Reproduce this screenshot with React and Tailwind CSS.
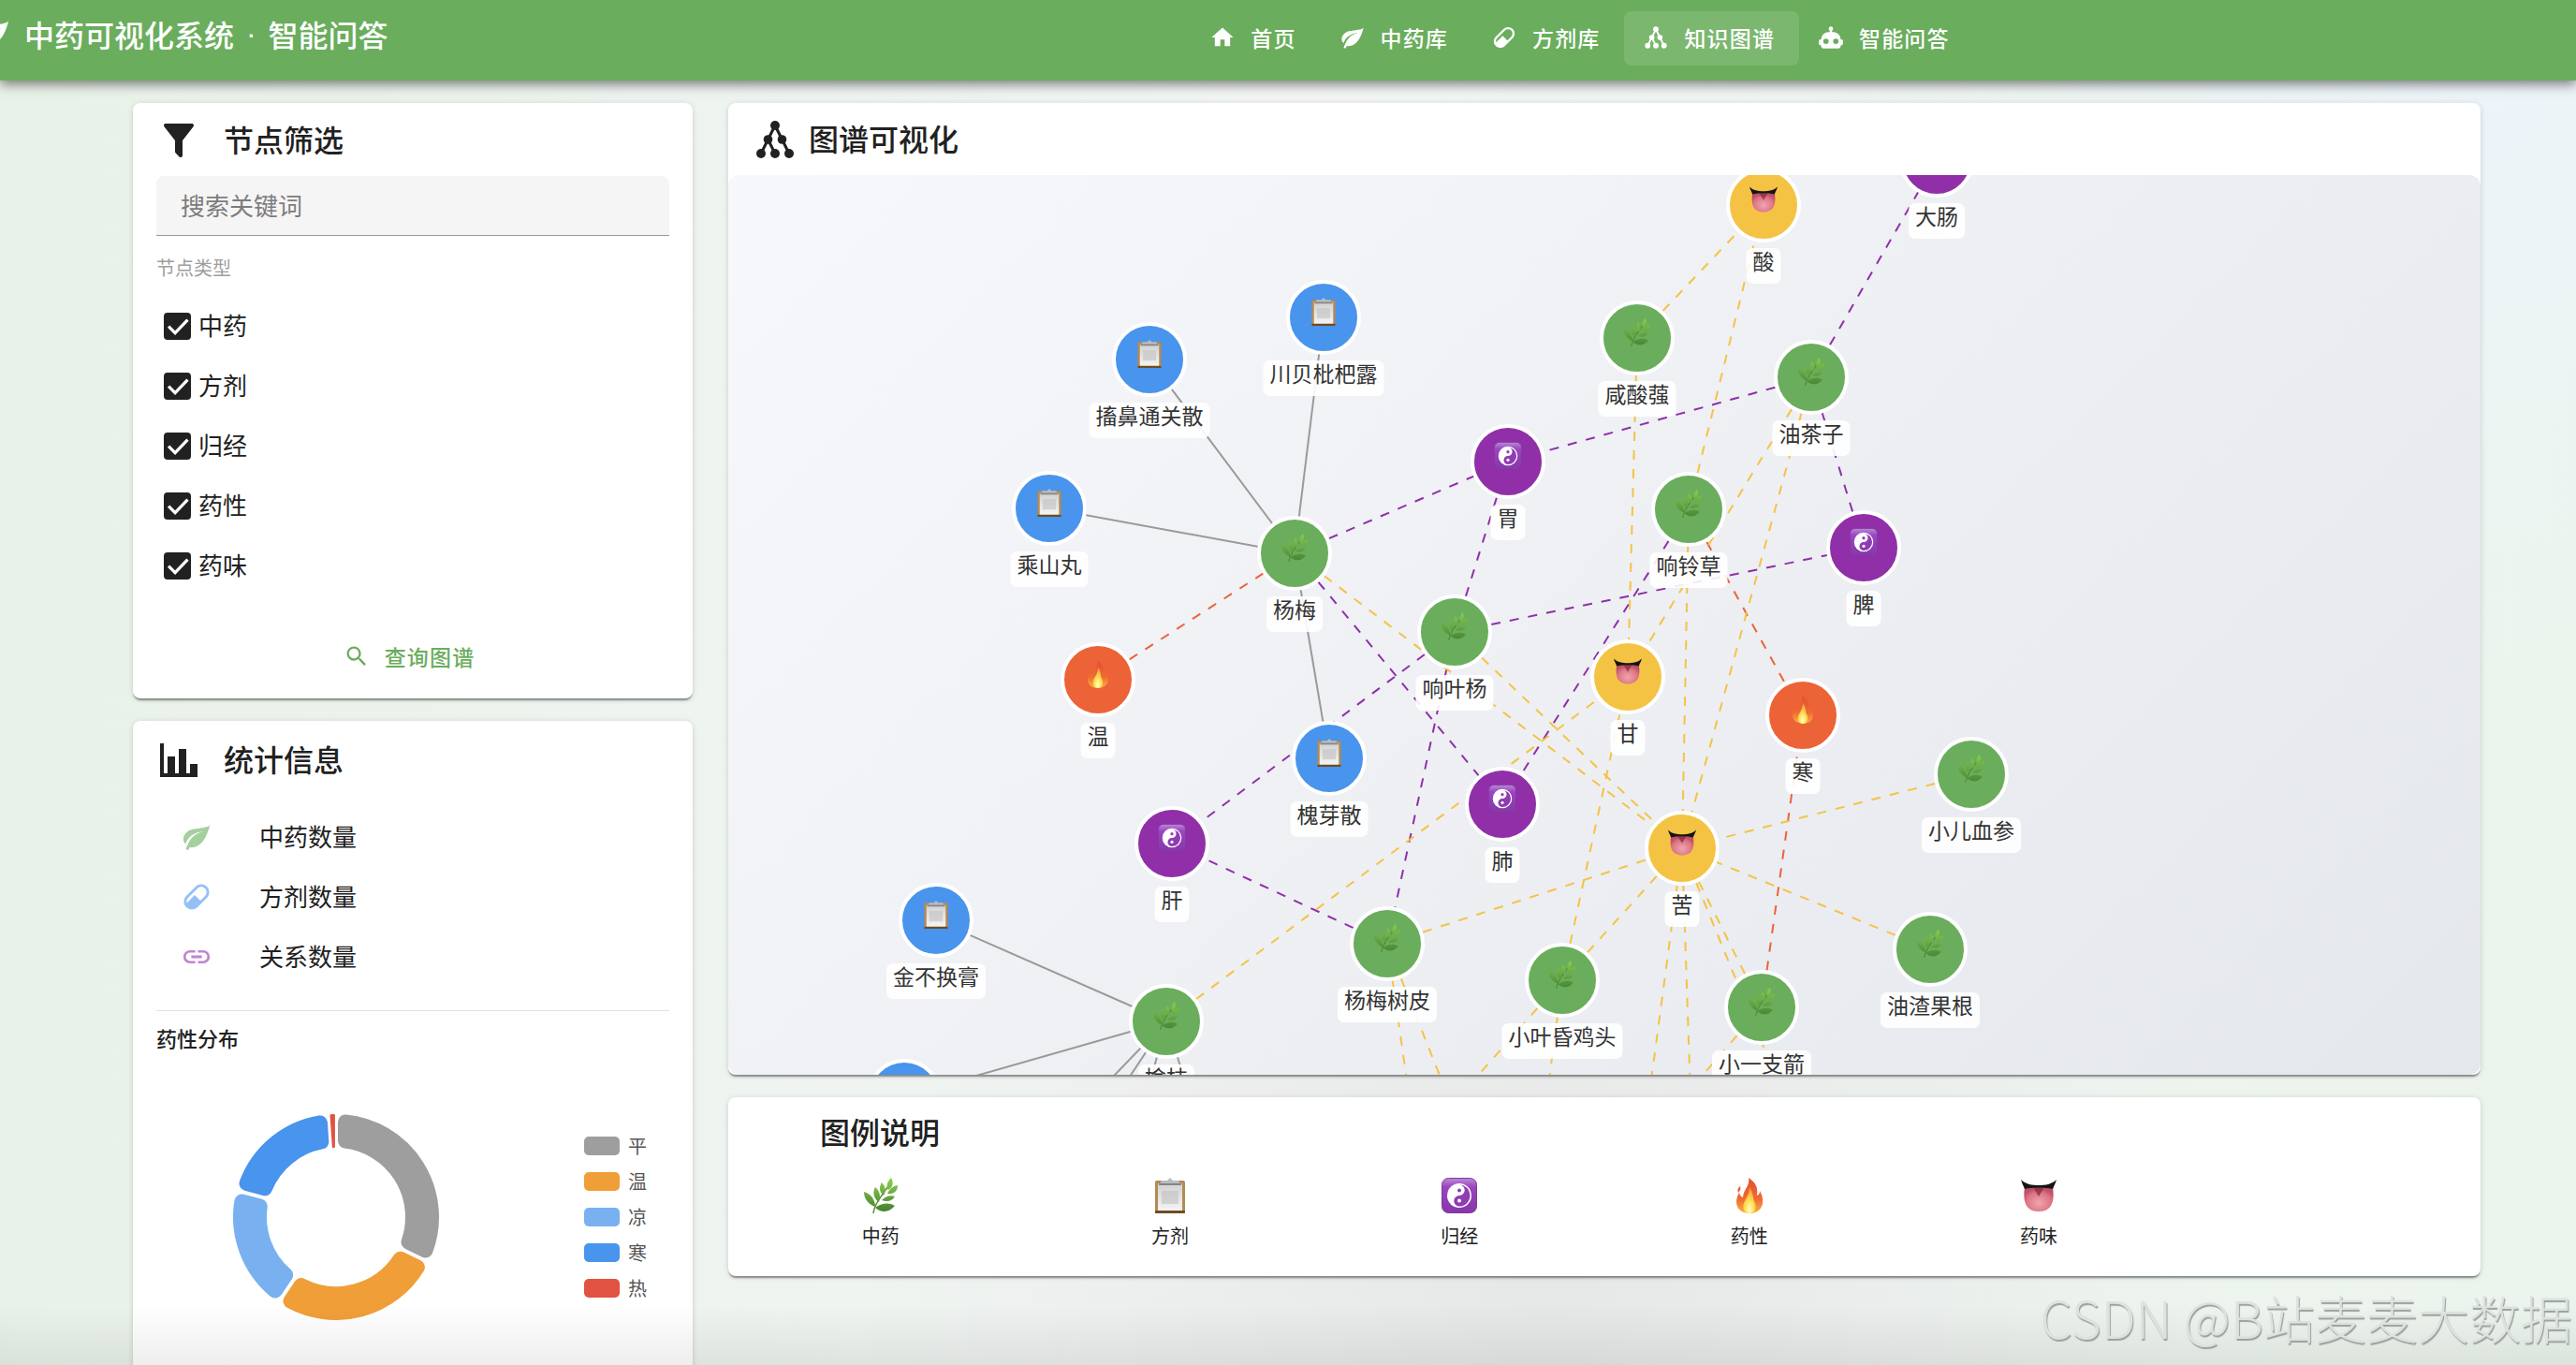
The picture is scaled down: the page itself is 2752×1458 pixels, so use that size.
import React, { useState } from "react";

const navItems = [
  { label: "首页", icon: "home" },
  { label: "中药库", icon: "leaf" },
  { label: "方剂库", icon: "pill" },
  { label: "知识图谱", icon: "graph" },
  { label: "智能问答", icon: "robot" },
];

const nodeTypes = ["中药", "方剂", "归经", "药性", "药味"];

const stats = [
  { label: "中药数量", icon: "leaf", color: "text-[#a5cf9f]" },
  { label: "方剂数量", icon: "pill", color: "text-[#93c1f6]" },
  { label: "关系数量", icon: "link", color: "text-[#bf85d0]" },
];

const natures = [
  { label: "平", fill: "#9e9e9e", swatch: "bg-[#9e9e9e]", from: 0, to: 116, corner: 8 },
  { label: "温", fill: "#f09e38", swatch: "bg-[#f09e38]", from: 116, to: 214, corner: 8 },
  { label: "凉", fill: "#79b1f0", swatch: "bg-[#79b1f0]", from: 214, to: 285, corner: 8 },
  { label: "寒", fill: "#4994ec", swatch: "bg-[#4994ec]", from: 285, to: 356, corner: 8 },
  { label: "热", fill: "#e25241", swatch: "bg-[#e25241]", from: 356, to: 360, corner: 1 },
];

const legendItems = [
  { label: "中药", kind: "herb" },
  { label: "方剂", kind: "formula" },
  { label: "归经", kind: "meridian" },
  { label: "药性", kind: "nature" },
  { label: "药味", kind: "taste" },
];

const nodeColors = {
  herb: "#6aad5d",
  formula: "#4994ec",
  meridian: "#902fa8",
  nature: "#ec6337",
  taste: "#f5c344",
};

// Coordinates are relative to the graph canvas
const nodes = {
  chuanbei: { x: 636, y: 152, kind: "formula", label: "川贝枇杷露" },
  chubi: { x: 450, y: 197, kind: "formula", label: "搐鼻通关散" },
  chengshan: { x: 343, y: 356, kind: "formula", label: "乘山丸" },
  yangmei: { x: 605, y: 404, kind: "herb", label: "杨梅" },
  suan: { x: 1106, y: 32, kind: "taste", label: "酸" },
  dachang: { x: 1291, y: -16, kind: "meridian", label: "大肠" },
  xiansuan: { x: 971, y: 174, kind: "herb", label: "咸酸蔃" },
  youcha: { x: 1157, y: 216, kind: "herb", label: "油茶子" },
  wei: { x: 833, y: 306, kind: "meridian", label: "胃" },
  xiangling: { x: 1026, y: 357, kind: "herb", label: "响铃草" },
  pi: { x: 1213, y: 398, kind: "meridian", label: "脾" },
  xiangye: { x: 776, y: 488, kind: "herb", label: "响叶杨" },
  gan: { x: 961, y: 536, kind: "taste", label: "甘" },
  wen: { x: 395, y: 539, kind: "nature", label: "温" },
  huaiya: { x: 642, y: 623, kind: "formula", label: "槐芽散" },
  ganzang: { x: 474, y: 714, kind: "meridian", label: "肝" },
  jinbuhuan: { x: 222, y: 796, kind: "formula", label: "金不换膏" },
  yuzhi: { x: 468, y: 904, kind: "herb", label: "榆枝" },
  hidden: { x: 188, y: 984, kind: "formula", label: "" },
  shupi: { x: 704, y: 821, kind: "herb", label: "杨梅树皮" },
  han: { x: 1148, y: 577, kind: "nature", label: "寒" },
  fei: { x: 827, y: 672, kind: "meridian", label: "肺" },
  ku: { x: 1019, y: 719, kind: "taste", label: "苦" },
  xiaoer: { x: 1328, y: 640, kind: "herb", label: "小儿血参" },
  youzha: { x: 1284, y: 827, kind: "herb", label: "油渣果根" },
  xiaoye: { x: 891, y: 860, kind: "herb", label: "小叶昏鸡头" },
  xiaoyi: { x: 1104, y: 889, kind: "herb", label: "小一支箭" },
};

// Second entry is a node key, or a point outside the visible canvas
const edges = [
  ["yangmei", "chubi", "plain"],
  ["yangmei", "chuanbei", "plain"],
  ["yangmei", "chengshan", "plain"],
  ["yangmei", "huaiya", "plain"],
  ["yuzhi", "jinbuhuan", "plain"],
  ["yuzhi", "hidden", "plain"],
  ["yuzhi", [388, 987], "plain"],
  ["yuzhi", [413, 987], "plain"],
  ["yuzhi", [446, 987], "plain"],
  ["yuzhi", [494, 987], "plain"],
  ["wen", "yangmei", "nature"],
  ["xiangling", "han", "nature"],
  ["xiaoyi", "han", "nature"],
  ["yangmei", "wei", "meridian"],
  ["youcha", "wei", "meridian"],
  ["youcha", "dachang", "meridian"],
  ["youcha", "pi", "meridian"],
  ["xiangye", "wei", "meridian"],
  ["xiangye", "pi", "meridian"],
  ["yangmei", "fei", "meridian"],
  ["xiangye", "ganzang", "meridian"],
  ["shupi", "ganzang", "meridian"],
  ["xiangye", "shupi", "meridian"],
  ["xiangling", "fei", "meridian"],
  ["xiansuan", "suan", "taste"],
  ["xiangling", "suan", "taste"],
  ["xiansuan", "gan", "taste"],
  ["youcha", "gan", "taste"],
  ["youcha", "ku", "taste"],
  ["xiangling", "ku", "taste"],
  ["yangmei", "ku", "taste"],
  ["xiangye", "ku", "taste"],
  ["yuzhi", "gan", "taste"],
  ["xiaoye", "gan", "taste"],
  ["shupi", "ku", "taste"],
  ["xiaoye", "ku", "taste"],
  ["xiaoyi", "ku", "taste"],
  ["xiaoer", "ku", "taste"],
  ["youzha", "ku", "taste"],
  ["ku", [1127, 982], "taste"],
  ["ku", [984, 982], "taste"],
  ["ku", [1028, 982], "taste"],
  ["xiaoyi", [1030, 974], "taste"],
  ["xiaoye", [876, 974], "taste"],
  ["xiaoye", [790, 974], "taste"],
  ["shupi", [726, 974], "taste"],
  ["shupi", [765, 974], "taste"],
];

const iconPaths = {
  home: "M10,20V14H14V20H19V12H22L12,3L2,12H5V20H10Z",
  leaf: "M17,8C8,10 5.9,16.17 3.82,21.34L5.71,22L6.66,19.7C7.14,19.87 7.64,20 8,20C19,20 22,3 22,3C21,5 14,5.25 9,6.25C4,7.25 2,11.5 2,13.5C2,15.5 3.75,17.25 3.75,17.25C7,8 17,8 17,8Z",
  pill: "M4.22,11.29L11.29,4.22C13.64,1.88 17.43,1.88 19.78,4.22C22.12,6.56 22.12,10.36 19.78,12.71L12.71,19.78C10.36,22.12 6.56,22.12 4.22,19.78C1.88,17.43 1.88,13.64 4.22,11.29M5.64,12.71C4.59,13.75 4.24,15.24 4.6,16.57L10.59,10.59L14.83,14.83L18.36,11.29C19.93,9.73 19.93,7.2 18.36,5.64C16.8,4.07 14.27,4.07 12.71,5.64L5.64,12.71Z",
  robot:
    "M12,2A2,2 0 0,1 14,4C14,4.74 13.6,5.39 13,5.73V7H14A7,7 0 0,1 21,14H22A1,1 0 0,1 23,15V18A1,1 0 0,1 22,19H21V20A2,2 0 0,1 19,22H5A2,2 0 0,1 3,20V19H2A1,1 0 0,1 1,18V15A1,1 0 0,1 2,14H3A7,7 0 0,1 10,7H11V5.73C10.4,5.39 10,4.74 10,4A2,2 0 0,1 12,2M7.5,13A2.5,2.5 0 0,0 5,15.5A2.5,2.5 0 0,0 7.5,18A2.5,2.5 0 0,0 10,15.5A2.5,2.5 0 0,0 7.5,13M16.5,13A2.5,2.5 0 0,0 14,15.5A2.5,2.5 0 0,0 16.5,18A2.5,2.5 0 0,0 19,15.5A2.5,2.5 0 0,0 16.5,13Z",
  filter:
    "M14,12V19.88C14.04,20.18 13.94,20.5 13.71,20.71C13.32,21.1 12.69,21.1 12.3,20.71L10.29,18.7C10.06,18.47 9.96,18.16 10,17.87V12H9.97L4.21,4.62C3.87,4.19 3.95,3.56 4.38,3.22C4.57,3.08 4.78,3 5,3H19C19.22,3 19.43,3.08 19.62,3.22C20.05,3.56 20.13,4.19 19.79,4.62L14.03,12H14Z",
  chart: "M22,21H2V3H4V19H6V10H10V19H12V6H16V19H18V14H22V21Z",
  link: "M3.9,12C3.9,10.29 5.29,8.9 7,8.9H11V7H7A5,5 0 0,0 2,12A5,5 0 0,0 7,17H11V15.1H7C5.29,15.1 3.9,13.71 3.9,12M8,13H16V11H8V13M17,7H13V8.9H17C18.71,8.9 20.1,10.29 20.1,12C20.1,13.71 18.71,15.1 17,15.1H13V17H17A5,5 0 0,0 22,12A5,5 0 0,0 17,7Z",
  search:
    "M9.5,3A6.5,6.5 0 0,1 16,9.5C16,11.11 15.41,12.59 14.44,13.73L14.71,14H15.5L20.5,19L19,20.5L14,15.5V14.71L13.73,14.44C12.59,15.41 11.11,16 9.5,16A6.5,6.5 0 0,1 3,9.5A6.5,6.5 0 0,1 9.5,3M9.5,5C7,5 5,7 5,9.5C5,12 7,14 9.5,14C12,14 14,12 14,9.5C14,7 12,5 9.5,5Z",
};

const Icon = ({ name, className }) => (
  <svg viewBox="0 0 24 24" className={className} fill="currentColor" aria-hidden="true">
    {name === "graph" ? (
      <>
        <path
          d="M12 4.5L8.25 12L4.5 19.5M8.25 12L12 19.5M12 4.5L15.75 12L19.5 19.5"
          fill="none"
          stroke="currentColor"
          strokeWidth="1.5"
        />
        <circle cx="12" cy="4.5" r="2.5" />
        <circle cx="8.25" cy="12" r="2.4" />
        <circle cx="15.75" cy="12" r="2.4" />
        <circle cx="4.5" cy="19.5" r="2.5" />
        <circle cx="12" cy="19.5" r="2.5" />
        <circle cx="19.5" cy="19.5" r="2.5" />
      </>
    ) : (
      <path d={iconPaths[name]} />
    )}
  </svg>
);

const Gradients = () => (
  <svg className="absolute size-0" aria-hidden="true">
    <defs>
      <linearGradient id="herbFill" x1="0" y1="0" x2="0" y2="38" gradientUnits="userSpaceOnUse">
        <stop offset="0" stopColor="#8fd14f" />
        <stop offset="1" stopColor="#3f7d2c" />
      </linearGradient>
      <linearGradient id="paperFill" x1="0" y1="0" x2="0" y2="1">
        <stop offset="0" stopColor="#d2d2d2" />
        <stop offset="1" stopColor="#f4f4f4" />
      </linearGradient>
      <linearGradient id="meridianFill" x1="0" y1="0" x2="0" y2="1">
        <stop offset="0" stopColor="#b98ad8" />
        <stop offset="0.25" stopColor="#9b45c0" />
        <stop offset="1" stopColor="#8637a8" />
      </linearGradient>
      <linearGradient id="flameOuter" x1="0" y1="0" x2="0" y2="1">
        <stop offset="0" stopColor="#e2502f" />
        <stop offset="0.6" stopColor="#f06a35" />
        <stop offset="1" stopColor="#f7b53c" />
      </linearGradient>
      <radialGradient id="flameInner" cx="0.5" cy="0.85" r="0.8">
        <stop offset="0" stopColor="#fffbd0" />
        <stop offset="0.4" stopColor="#ffe556" />
        <stop offset="1" stopColor="#f59a3a" />
      </radialGradient>
      <radialGradient id="tongueFill" cx="0.5" cy="0.65" r="0.6">
        <stop offset="0" stopColor="#f0a5ae" />
        <stop offset="0.7" stopColor="#dd7586" />
        <stop offset="1" stopColor="#bd4f66" />
      </radialGradient>
    </defs>
  </svg>
);

// Pictograms share a 38 unit box
const Pictogram = ({ kind }) => {
  if (kind === "herb") {
    return (
      <g fill="url(#herbFill)">
        <path d="M11 38C12 29 19 20 27 9" fill="none" stroke="#4d8530" strokeWidth="1.4" />
        <path d="M30 0C33 5 32 10 27 13C24 9 26 4 30 0Z" />
        <path d="M20 5C24 9 25 14 22 19C17 15 17 10 20 5Z" />
        <path d="M13 10C18 14 19 20 17 26C11 22 10 15 13 10Z" />
        <path d="M1 15C8 17 13 23 13 31C5 28 1 22 1 15Z" />
        <path d="M37 8C37 14 33 18 26 17C28 12 32 9 37 8Z" />
        <path d="M34 20C31 25 26 26 20 24C24 20 29 18 34 20Z" />
        <path d="M34 30C28 37 20 38 13 32C19 27 28 26 34 30Z" />
      </g>
    );
  }
  if (kind === "formula") {
    return (
      <g>
        <rect x="3" y="3" width="32" height="35" rx="2" fill="#b58a50" />
        <rect x="3" y="35" width="32" height="3" rx="1" fill="#6e4c22" />
        <rect x="6" y="6" width="26" height="29" fill="url(#paperFill)" />
        <path d="M10 14H28V28H10Z" fill="#c2c2c2" opacity="0.6" />
        <path d="M8 6L10 3H16L19 0L22 3H28L30 6Z" fill="#b7bcc4" />
        <path d="M7 6H31V8H7Z" fill="#858585" />
      </g>
    );
  }
  if (kind === "meridian") {
    return (
      <g>
        <rect x="0.5" y="0.5" width="37" height="37" rx="7" fill="url(#meridianFill)" stroke="#7d3a9c" />
        <circle cx="19" cy="19" r="13" fill="#fff" />
        <path d="M19 7.5A11.5 11.5 0 0 1 19 30.5A5.75 5.75 0 0 1 19 19A5.75 5.75 0 0 0 19 7.5Z" fill="#8f3cb2" />
        <circle cx="19" cy="13.5" r="2" fill="#8f3cb2" />
        <circle cx="19" cy="24.5" r="2" fill="#fff" />
      </g>
    );
  }
  if (kind === "nature") {
    return (
      <g>
        <path
          d="M18 0C27 6 28 12 27 19C29 18 30 17 30 14C35 22 36 37 19 38C3 37 3 24 8 16C9 19 10 20 12 21C12 13 20 9 18 0Z"
          fill="url(#flameOuter)"
        />
        <path d="M9 9C6 11 6 14 7 16C9 14 10 12 9 9Z" fill="#e9603a" />
        <path d="M19 10C24 17 22 22 25 27C27 33 24 38 19 38C13 38 11 32 13 27C15 22 19 18 19 10Z" fill="url(#flameInner)" />
      </g>
    );
  }
  return (
    <g>
      <path d="M4 10H34C36 24 34 36 19 36C4 36 2 24 4 10Z" fill="url(#tongueFill)" />
      <path d="M13 10H25L19 20Z" fill="#7c2838" opacity="0.7" />
      <path d="M0 2C5 7 12 8 19 8C26 8 33 7 38 2C37 6 35 9 34 12C26 10 12 10 4 12C3 9 1 6 0 2Z" fill="#141414" />
    </g>
  );
};

const Card = ({ className, children }) => (
  <section
    className={`rounded-lg bg-white shadow-[0_3px_2px_-1px_rgba(0,0,0,0.4),0_1px_6px_rgba(0,0,0,0.14)] ${className}`}
  >
    {children}
  </section>
);

const Header = () => (
  <header className="relative flex h-[86px] items-start bg-[#6aad5d] text-white shadow-[0_4px_12px_rgba(0,0,0,0.5)]">
    <div className="-ml-6 flex h-[72px] items-center gap-[14px]">
      <Icon name="leaf" className="size-9" />
      <h1 className="flex text-[32px] font-medium">
        <span>中药可视化系统</span>
        <span className="mx-1 font-['Liberation_Sans'] whitespace-pre"> · </span>
        <span>智能问答</span>
      </h1>
    </div>
    <div className="grow-4" />
    <nav className="flex pt-3">
      {navItems.map((item) => (
        <a
          key={item.label}
          href="#"
          className={`flex h-[58px] items-center gap-4 rounded-lg pr-[26px] pb-[2px] pl-5 text-[23px] font-medium tracking-wider ${
            item.label === "知识图谱" ? "bg-white/12" : ""
          }`}
        >
          <Icon name={item.icon} className="size-7" />
          {item.label}
        </a>
      ))}
    </nav>
    <div className="grow-3" />
  </header>
);

const FilterCard = () => {
  const [keyword, setKeyword] = useState("");
  const [checked, setChecked] = useState(nodeTypes);

  const toggle = (type) =>
    setChecked((prev) =>
      prev.includes(type) ? prev.filter((t) => t !== type) : [...prev, type]
    );

  return (
    <Card className="px-[25px] py-4">
      <h2 className="flex h-12 items-center gap-6 text-[32px] font-medium">
        <Icon name="filter" className="size-12" />
        <span className="pb-1">节点筛选</span>
      </h2>
      <input
        type="text"
        aria-label="搜索关键词"
        placeholder="搜索关键词"
        value={keyword}
        onChange={(e) => setKeyword(e.target.value)}
        className="mt-[14px] h-16 w-full rounded-t-lg border-b border-[#9a9a9a] bg-[#f5f5f5] px-[26px] pb-[2px] text-[26px] outline-none placeholder:text-[#7d7d7d]"
      />
      <fieldset className="pt-5">
        <legend className="contents">
          <span className="block text-xl leading-7 text-[#9e9e9e]">节点类型</span>
        </legend>
        <div className="mt-4">
          {nodeTypes.map((type) => (
            <label key={type} className="flex h-16 items-center gap-2 pl-2 text-[26px]">
              <span className="grid size-[29px] place-items-center">
                <input
                  type="checkbox"
                  checked={checked.includes(type)}
                  onChange={() => toggle(type)}
                  className="col-start-1 row-start-1 size-[29px] appearance-none rounded-sm border-2 border-[#212121] checked:bg-[#212121]"
                />
                <svg viewBox="0 0 24 24" className="pointer-events-none col-start-1 row-start-1 size-7" aria-hidden="true">
                  <path d="M3.5 12.5L9.5 18.5L21 6.5" fill="none" stroke="#fff" strokeWidth="2.8" />
                </svg>
              </span>
              <span className="pb-1">{type}</span>
            </label>
          ))}
        </div>
      </fieldset>
      <button
        type="button"
        className="mt-9 flex h-[58px] w-full items-center justify-center gap-4 pr-2 text-[23px] font-medium tracking-wider text-[#6aad5d]"
      >
        <Icon name="search" className="size-7" />
        查询图谱
      </button>
    </Card>
  );
};

const RADIUS = { outer: 110, inner: 74 };

// The slice is inset by its corner radius, and a round-joined stroke brings it back to full size
const slicePath = ({ from, to, corner }) => {
  const outer = RADIUS.outer - corner;
  const inner = RADIUS.inner + corner;
  const point = (radius, side) => {
    const shift = Math.asin((corner + 2) / radius) * (corner > 1 ? 1 : 0.7);
    const angle = ((side === "from" ? from : to) * Math.PI) / 180 + (side === "from" ? shift : -shift);
    return `${110 + radius * Math.sin(angle)} ${110 - radius * Math.cos(angle)}`;
  };
  return [
    `M${point(outer, "from")}`,
    `A${outer} ${outer} 0 0 1 ${point(outer, "to")}`,
    `L${point(inner, "to")}`,
    `A${inner} ${inner} 0 0 0 ${point(inner, "from")}Z`,
  ].join("");
};

const StatsCard = () => (
  <Card className="px-[25px] pt-[18px] pb-16">
    <h2 className="flex h-12 items-center gap-6 text-[32px] font-medium">
      <Icon name="chart" className="size-12" />
      <span className="pb-1">统计信息</span>
    </h2>
    <ul className="mt-[26px]">
      {stats.map((item) => (
        <li key={item.label} className="flex h-16 items-center gap-[50px] pl-[26px] text-[26px]">
          <Icon name={item.icon} className={`size-[34px] ${item.color}`} />
          <span className="pb-1">{item.label}</span>
        </li>
      ))}
    </ul>
    <hr className="mt-[25px] border-[#e0e0e0]" />
    <h3 className="mt-3 text-[22px] leading-8 font-medium">药性分布</h3>
    <div className="mt-[66px] flex items-center justify-between pr-6 pl-[82px]">
      <svg viewBox="0 0 220 220" className="size-[220px]" role="img" aria-label="药性分布">
        {natures.map((item) => (
          <path
            key={item.label}
            d={slicePath(item)}
            fill={item.fill}
            stroke={item.fill}
            strokeWidth={item.corner * 2}
            strokeLinejoin="round"
          />
        ))}
      </svg>
      <ul className="flex flex-col gap-[10px]">
        {natures.map((item) => (
          <li key={item.label} className="flex items-center gap-[9px] text-xl leading-7 text-[#555]">
            <span className={`h-5 w-[38px] rounded-[5px] ${item.swatch}`} />
            {item.label}
          </li>
        ))}
      </ul>
    </div>
  </Card>
);

const GraphNode = ({ x, y, kind, label }) => {
  const width = label.length * 23 + 14;
  return (
    <g>
      <circle cx={x} cy={y} r="38" fill={nodeColors[kind]} stroke="#fff" strokeWidth="4" />
      <svg
        x={x - 15}
        y={y - 21}
        width="30"
        height="30"
        viewBox="0 0 38 38"
        opacity={kind === "herb" ? 0.85 : 1}
      >
        <Pictogram kind={kind} />
      </svg>
      {label && (
        <>
          <rect x={x - width / 2} y={y + 46} width={width} height="38" rx="7" fill="#fff" opacity="0.9" />
          <text x={x} y={y + 69} textAnchor="middle" fontSize="23" fill="#333">
            {label}
          </text>
        </>
      )}
    </g>
  );
};

const GraphCard = () => (
  <Card className="overflow-hidden">
    <h2 className="flex h-[77px] items-center gap-3 px-[26px] text-[32px] font-medium">
      <Icon name="graph" className="size-12" />
      <span className="pb-1">图谱可视化</span>
    </h2>
    <div className="h-[961px] overflow-hidden rounded-xl bg-linear-135 from-[#f7f8fb] to-[#e4e7ec]">
      <svg className="h-full w-full" role="img" aria-label="图谱可视化">
        {edges.map(([source, target, kind]) => {
          const a = nodes[source];
          const b = Array.isArray(target) ? { x: target[0], y: target[1] } : nodes[target];
          return (
            <line
              key={`${source}-${target}`}
              x1={a.x}
              y1={a.y}
              x2={b.x}
              y2={b.y}
              stroke={nodeColors[kind] || "#9a9a9a"}
              strokeWidth="2"
              strokeDasharray={kind === "plain" ? undefined : "10 10"}
            />
          );
        })}
        {Object.entries(nodes).map(([key, node]) => (
          <GraphNode key={key} {...node} />
        ))}
      </svg>
    </div>
  </Card>
);

const LegendCard = () => (
  <Card className="px-2 pt-3 pb-[29px]">
    <h2 className="pl-[90px] text-[32px] leading-12 font-medium">图例说明</h2>
    <ul className="mt-[26px] grid grid-cols-6">
      {legendItems.map((item) => (
        <li key={item.label} className="flex flex-col items-center gap-[10px] text-xl leading-7">
          <svg viewBox="0 0 38 38" className="size-[38px]" aria-hidden="true">
            <Pictogram kind={item.kind} />
          </svg>
          {item.label}
        </li>
      ))}
    </ul>
  </Card>
);

const App = () => {
  return (
    <div className="relative h-screen overflow-hidden bg-[#eef4ef] bg-[radial-gradient(circle_at_96%_6%,#edf4fa_0%,transparent_22%),radial-gradient(circle_at_60%_95%,#e6e7e7_0%,transparent_34%),linear-gradient(90deg,#e9f2e9,#f2f5f4_50%,#ebf4ec)] font-['Noto_Sans_CJK_SC',sans-serif] text-[#212121]">
      <Gradients />
      <Header />
      <main className="flex items-start gap-[38px] pt-6 pr-[102px] pl-[142px]">
        <aside className="flex w-[598px] shrink-0 flex-col gap-6">
          <FilterCard />
          <StatsCard />
        </aside>
        <div className="flex min-w-0 grow flex-col gap-6">
          <GraphCard />
          <LegendCard />
        </div>
      </main>
      <div className="pointer-events-none absolute inset-x-0 bottom-0 h-16 bg-linear-to-t from-black/7 to-transparent" />
      <p className="pointer-events-none absolute right-1 bottom-3 text-[55px] leading-[80px] font-light text-[#dde2de] [text-shadow:1px_2px_1px_#9aa09b]">
        CSDN @B站麦麦大数据
      </p>
    </div>
  );
};

export default App;
